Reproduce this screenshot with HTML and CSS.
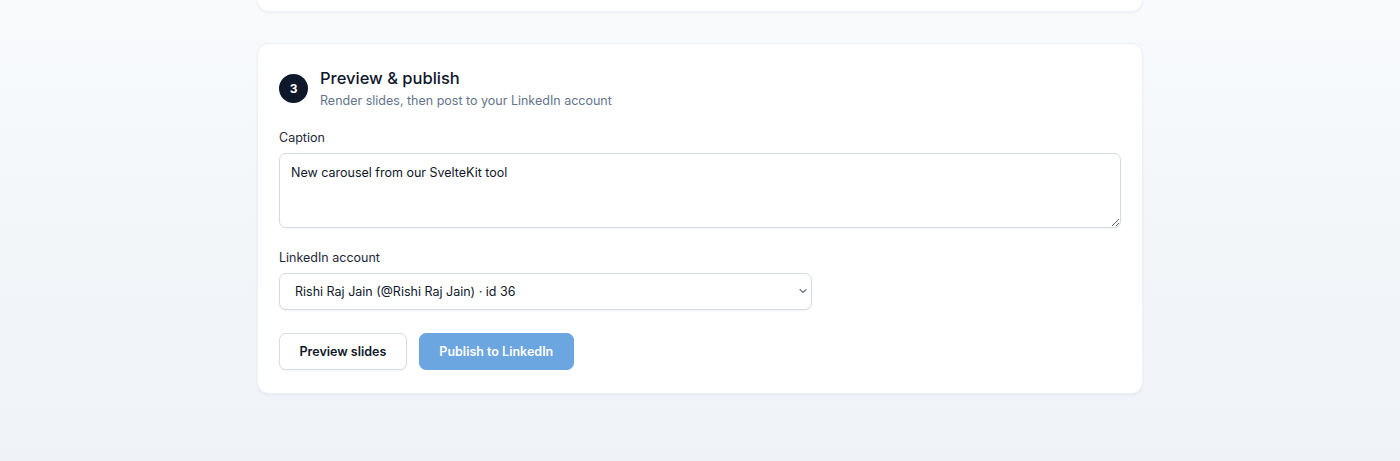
FILE: index.html
```html
<!DOCTYPE html>
<html lang="en">
<head>
<meta charset="utf-8">
<title>Preview &amp; publish</title>
<link rel="stylesheet" href="styles.css">
</head>
<body>
<main class="page">
  <div class="card card-prev"></div>
  <section class="card">
    <header class="step-head">
      <span class="step-num">3</span>
      <div class="step-text">
        <h2 class="step-title">Preview &amp; publish</h2>
        <p class="step-sub">Render slides, then post to your LinkedIn account</p>
      </div>
    </header>
    <div class="field field-first">
      <label class="label" for="caption">Caption</label>
      <textarea id="caption" class="textarea">New carousel from our SvelteKit tool</textarea>
    </div>
    <div class="field">
      <label class="label" for="account">LinkedIn account</label>
      <div class="select-wrap">
        <select id="account" class="select">
          <option>Rishi Raj Jain (@Rishi Raj Jain) · id 36</option>
        </select>
        <svg class="chev" width="10" height="10" viewBox="0 0 10 10"><path d="M2 3.5 L5 6.5 L8 3.5" fill="none" stroke="#6b7280" stroke-width="1.1" stroke-linecap="round" stroke-linejoin="round"/></svg>
      </div>
    </div>
    <div class="actions">
      <button class="btn btn-outline" type="button">Preview slides</button>
      <button class="btn btn-primary" type="button" disabled>Publish to LinkedIn</button>
    </div>
  </section>
</main>
</body>
</html>
```

FILE: styles.css
```css
* { box-sizing: border-box; }
html, body { margin: 0; }
body {
  min-height: 461px;
  background: linear-gradient(180deg, #f8fafc 0%, #eff3f7 100%);
  font-family: Inter, "Noto Sans", "Liberation Sans", sans-serif;
  color: #0f172a;
}
.page {
  width: 886px;
  margin: 0 auto;
  display: flex;
  flex-direction: column;
  gap: 31px;
}
.card {
  background: #ffffff;
  border: 1px solid #eef1f5;
  border-radius: 12px;
  box-shadow: 0 1px 3px rgba(15, 23, 42, 0.05);
  padding: 21px 21px 23px;
}
.card-prev {
  height: 12px;
  padding: 0;
  border-top: none;
  border-radius: 0 0 12px 12px;
}
.step-head {
  display: flex;
  align-items: center;
  gap: 12px;
  margin-top: 1px;
}
.step-num {
  width: 29px;
  height: 29px;
  border-radius: 50%;
  background: #0f172a;
  color: #fff;
  font-size: 12px;
  font-weight: 700;
  display: flex;
  align-items: center;
  justify-content: center;
  flex: none;
}
.step-title {
  margin: 0;
  font-size: 16.5px;
  font-weight: 500;
  line-height: 24px;
  color: #0f172a;
}
.step-sub {
  margin: 2px 0 0;
  font-size: 12.5px;
  line-height: 18px;
  color: #64748b;
}
.field {
  display: flex;
  flex-direction: column;
  gap: 6px;
  margin-top: 21px;
}
.field-first {
  margin-top: 19px;
}
.label {
  font-size: 12.5px;
  line-height: 18px;
  color: #1e293b;
}
.textarea {
  height: 75px;
  width: 100%;
  border: 1px solid #d3dbe5;
  border-radius: 7px;
  padding: 10px 11px;
  font-family: inherit;
  font-size: 12.5px;
  line-height: 18px;
  color: #0f172a;
  box-shadow: 0 1px 2px rgba(15, 23, 42, 0.05);
  resize: vertical;
}
.select-wrap {
  position: relative;
  width: 533px;
}
.select {
  appearance: none;
  -webkit-appearance: none;
  width: 100%;
  height: 37px;
  border: 1px solid #d3dbe5;
  border-radius: 7px;
  background: #fff;
  padding: 0 30px 0 15px;
  font-family: inherit;
  font-size: 12.5px;
  color: #0f172a;
  box-shadow: 0 1px 2px rgba(15, 23, 42, 0.05);
}
.chev {
  position: absolute;
  right: 4px;
  top: 13px;
  pointer-events: none;
}
.actions {
  display: flex;
  gap: 12px;
  margin-top: 23px;
}
.btn {
  height: 37px;
  border-radius: 7px;
  font-family: inherit;
  font-size: 12.5px;
  font-weight: 600;
  padding: 0 19.5px;
}
.btn-outline {
  background: #fff;
  border: 1px solid #d6dde6;
  color: #0f172a;
  box-shadow: 0 1px 2px rgba(15, 23, 42, 0.05);
}
.btn-primary {
  background: #6ca6e0;
  border: 1px solid #6ca6e0;
  color: #ffffff;
}
```
